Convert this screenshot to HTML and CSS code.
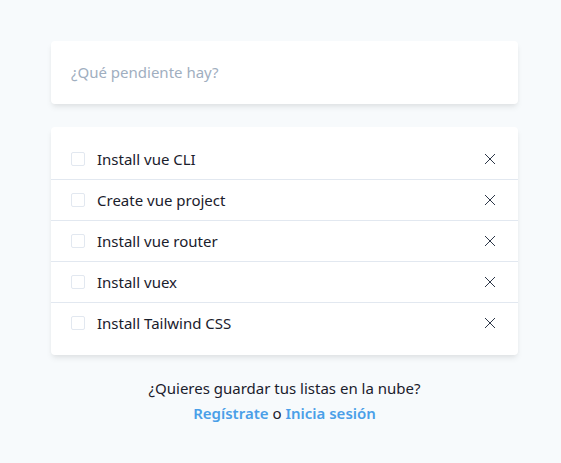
FILE: index.html
```html
<!DOCTYPE html>
<html lang="es">
<head>
  <meta charset="UTF-8" />
  <meta name="viewport" content="width=device-width, initial-scale=1.0"/>
  <title>Pendientes</title>
  <link rel="stylesheet" href="styles.css">
</head>
<body>
  <main class="todo-app">
    <div class="todo-new">
      <input type="text" class="todo-input" placeholder="¿Qué pendiente hay?" />
    </div>

    <ul class="todo-list">
      <li class="todo-item">
        <span class="todo-check"></span>
        <span class="todo-label">Install vue CLI</span>
        <button class="todo-remove" aria-label="Eliminar">
          <svg viewBox="0 0 12 12" width="12" height="12"><path d="M1 1L11 11M11 1L1 11" /></svg>
        </button>
      </li>
      <li class="todo-item">
        <span class="todo-check"></span>
        <span class="todo-label">Create vue project</span>
        <button class="todo-remove" aria-label="Eliminar">
          <svg viewBox="0 0 12 12" width="12" height="12"><path d="M1 1L11 11M11 1L1 11" /></svg>
        </button>
      </li>
      <li class="todo-item">
        <span class="todo-check"></span>
        <span class="todo-label">Install vue router</span>
        <button class="todo-remove" aria-label="Eliminar">
          <svg viewBox="0 0 12 12" width="12" height="12"><path d="M1 1L11 11M11 1L1 11" /></svg>
        </button>
      </li>
      <li class="todo-item">
        <span class="todo-check"></span>
        <span class="todo-label">Install vuex</span>
        <button class="todo-remove" aria-label="Eliminar">
          <svg viewBox="0 0 12 12" width="12" height="12"><path d="M1 1L11 11M11 1L1 11" /></svg>
        </button>
      </li>
      <li class="todo-item">
        <span class="todo-check"></span>
        <span class="todo-label">Install Tailwind CSS</span>
        <button class="todo-remove" aria-label="Eliminar">
          <svg viewBox="0 0 12 12" width="12" height="12"><path d="M1 1L11 11M11 1L1 11" /></svg>
        </button>
      </li>
    </ul>

    <footer class="todo-footer">
      <p>¿Quieres guardar tus listas en la nube?</p>
      <p><a href="#" class="link">Regístrate</a> o <a href="#" class="link">Inicia sesión</a></p>
    </footer>
  </main>
</body>
</html>
```

FILE: styles.css
```css
body {
  margin: 0;
  padding: 41px 0 0 8px;
  background-color: #f7fafc;
  font-family: 'Noto Sans', 'Open Sans', sans-serif;
  font-size: 15px;
  color: #1a202c;
}

.todo-app {
  max-width: 467px;
  margin: 0 auto;
}

.todo-new {
  background: #fff;
  border-radius: 4px;
  box-shadow: 0 4px 6px -1px rgba(0, 0, 0, 0.08), 0 2px 4px -1px rgba(0, 0, 0, 0.04);
}

.todo-input {
  display: block;
  width: 100%;
  box-sizing: border-box;
  padding: 20px;
  border: 0;
  background: transparent;
  font: inherit;
  line-height: 23px;
  color: #1a202c;
  outline: none;
}

.todo-input::placeholder {
  color: #a0aec0;
}

.todo-list {
  list-style: none;
  margin: 23px 0 0;
  padding: 12px 0;
  background: #fff;
  border-radius: 4px;
  box-shadow: 0 4px 6px -1px rgba(0, 0, 0, 0.08), 0 2px 4px -1px rgba(0, 0, 0, 0.04);
}

.todo-item {
  display: flex;
  align-items: center;
  gap: 12px;
  height: 40px;
  padding: 0 20px;
  border-bottom: 1px solid #e2e8f0;
}

.todo-item:last-child {
  border-bottom: 0;
}

.todo-check {
  width: 12px;
  height: 12px;
  border: 1px solid #e2e8f0;
  border-radius: 2px;
  flex-shrink: 0;
}

.todo-label {
  flex: 1;
  line-height: 24px;
}

.todo-remove {
  display: flex;
  padding: 0;
  margin-right: 2px;
  border: 0;
  background: none;
  cursor: pointer;
}

.todo-remove svg {
  stroke: #2d3748;
  stroke-width: 1;
  fill: none;
}

.todo-footer {
  margin-top: 21px;
  text-align: center;
  line-height: 25px;
}

.todo-footer p {
  margin: 0;
}

.link {
  color: #4a9fe8;
  font-weight: 600;
  text-decoration: none;
}
```
